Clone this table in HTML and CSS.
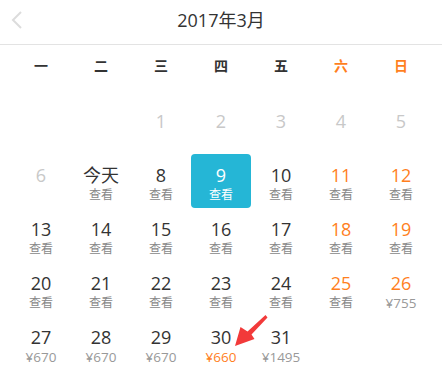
FILE: index.html
```html
<!DOCTYPE html>
<html lang="zh">
<head>
<meta charset="utf-8">
<link rel="stylesheet" href="styles.css">
</head>
<body>
<div class="cal">
  <header class="head">
    <svg class="back" width="14" height="20" viewBox="0 0 14 20"><path d="M10 2 L2 10 L10 18" fill="none" stroke="#dcdcdc" stroke-width="2"/></svg>
    <div class="title">2017年3月</div>
  </header>
  <div class="week">
    <span>一</span><span>二</span><span>三</span><span>四</span><span>五</span><span class="we">六</span><span class="we">日</span>
  </div>
  <div class="days">
    <div class="cell"></div>
    <div class="cell"></div>
    <div class="cell past"><div class="n">1</div></div>
    <div class="cell past"><div class="n">2</div></div>
    <div class="cell past"><div class="n">3</div></div>
    <div class="cell past"><div class="n">4</div></div>
    <div class="cell past"><div class="n">5</div></div>

    <div class="cell past"><div class="n">6</div></div>
    <div class="cell"><div class="n">今天</div><div class="s">查看</div></div>
    <div class="cell"><div class="n">8</div><div class="s">查看</div></div>
    <div class="cell sel"><div class="n">9</div><div class="s">查看</div></div>
    <div class="cell"><div class="n">10</div><div class="s">查看</div></div>
    <div class="cell we"><div class="n">11</div><div class="s">查看</div></div>
    <div class="cell we"><div class="n">12</div><div class="s">查看</div></div>

    <div class="cell"><div class="n">13</div><div class="s">查看</div></div>
    <div class="cell"><div class="n">14</div><div class="s">查看</div></div>
    <div class="cell"><div class="n">15</div><div class="s">查看</div></div>
    <div class="cell"><div class="n">16</div><div class="s">查看</div></div>
    <div class="cell"><div class="n">17</div><div class="s">查看</div></div>
    <div class="cell we"><div class="n">18</div><div class="s">查看</div></div>
    <div class="cell we"><div class="n">19</div><div class="s">查看</div></div>

    <div class="cell"><div class="n">20</div><div class="s">查看</div></div>
    <div class="cell"><div class="n">21</div><div class="s">查看</div></div>
    <div class="cell"><div class="n">22</div><div class="s">查看</div></div>
    <div class="cell"><div class="n">23</div><div class="s">查看</div></div>
    <div class="cell"><div class="n">24</div><div class="s">查看</div></div>
    <div class="cell we"><div class="n">25</div><div class="s">查看</div></div>
    <div class="cell we"><div class="n">26</div><div class="s price">¥755</div></div>

    <div class="cell"><div class="n">27</div><div class="s price">¥670</div></div>
    <div class="cell"><div class="n">28</div><div class="s price">¥670</div></div>
    <div class="cell"><div class="n">29</div><div class="s price">¥670</div></div>
    <div class="cell"><div class="n">30</div><div class="s price low">¥660</div></div>
    <div class="cell"><div class="n">31</div><div class="s price">¥1495</div></div>
  </div>
  <svg class="arrow" width="442" height="385" viewBox="0 0 442 385">
    <polygon points="265.5,315 267.5,317.5 251.5,334.5 254.5,339 235,346 240.5,327 247.5,331.5" fill="#f23a3a"/>
  </svg>
</div>
</body>
</html>
```

FILE: styles.css
```css
* { box-sizing: border-box; }
html, body { margin: 0; padding: 0; background: #fff; }
body {
  font-family: "Open Sans", "Noto Sans CJK SC", sans-serif;
  color: #333;
  width: 442px;
  height: 385px;
  overflow: hidden;
}
.cal { position: relative; width: 442px; }
.head {
  position: relative;
  height: 45px;
  border-bottom: 1px solid #e3e3e3;
  display: flex;
  align-items: center;
  justify-content: center;
}
.back { position: absolute; left: 11px; top: 10px; }
.title { font-size: 18px; line-height: 24px; margin-top: -5px; color: #333; }
.week {
  display: grid;
  grid-template-columns: repeat(7, 60px);
  padding: 0 11px;
  height: 40px;
  align-items: center;
  margin-bottom: 15px;
}
.week span {
  text-align: center;
  font-family: "Noto Sans CJK SC", sans-serif;
  font-size: 14px;
  font-weight: bold;
  line-height: 20px;
  color: #333;
}
.week span.we { color: #ff7f1e; }
.days {
  display: grid;
  grid-template-columns: repeat(7, 60px);
  grid-auto-rows: 54px;
  padding: 0 11px;
}
.cell {
  text-align: center;
  padding-top: 10px;
  border-radius: 4px;
}
.n { font-size: 18px; line-height: 22px; height: 22px; color: #333; }
.s { font-size: 12px; line-height: 18px; height: 18px; color: #888; }
.price { font-size: 13.5px; color: #999; }
.price.low { color: #ff7f1e; }
.past .n { color: #c8c8c8; }
.we .n { color: #ff7f1e; }
.sel { background: #25b6d6; }
.sel .n, .sel .s { color: #fff; }
.arrow { position: absolute; left: 0; top: 0; pointer-events: none; }
```
